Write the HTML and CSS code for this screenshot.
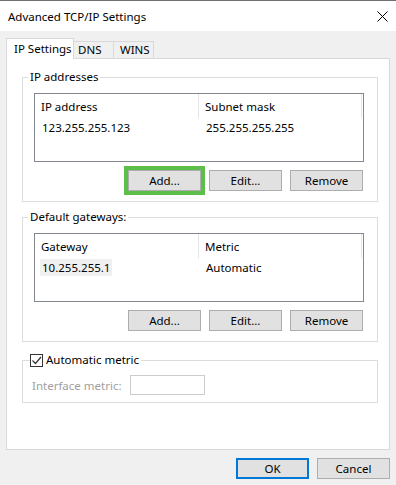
FILE: index.html
```html
<!DOCTYPE html>
<html lang="en">
<head>
  <meta charset="UTF-8" />
  <title>Advanced TCP/IP Settings</title>
  <link rel="stylesheet" href="styles.css">
</head>
<body>
  <div class="window">
    <div class="titlebar">
      <span class="title">Advanced TCP/IP Settings</span>
      <svg class="close" width="11" height="11" viewBox="0 0 11 11">
        <path d="M0.5 0.5 L10.5 10.5 M10.5 0.5 L0.5 10.5" stroke="#000" stroke-width="1" fill="none"/>
      </svg>
    </div>

    <div class="content">
      <div class="tabs">
        <div class="tab active">IP Settings</div>
        <div class="tab tab-dns">DNS</div>
        <div class="tab tab-wins">WINS</div>
      </div>

      <div class="panel">
        <fieldset class="group">
          <legend>IP addresses</legend>
          <div class="listview">
            <div class="lv-head">
              <div class="col c1">IP address</div>
              <div class="col c2">Subnet mask</div>
            </div>
            <div class="lv-row">
              <div class="col c1"><span class="cell">123.255.255.123</span></div>
              <div class="col c2"><span class="cell">255.255.255.255</span></div>
            </div>
          </div>
          <div class="buttons">
            <button class="btn highlight">Add...</button>
            <button class="btn">Edit...</button>
            <button class="btn">Remove</button>
          </div>
        </fieldset>

        <fieldset class="group group-gw">
          <legend>Default gateways:</legend>
          <div class="listview">
            <div class="lv-head">
              <div class="col c1">Gateway</div>
              <div class="col c2">Metric</div>
            </div>
            <div class="lv-row">
              <div class="col c1"><span class="cell selected">10.255.255.1</span></div>
              <div class="col c2"><span class="cell">Automatic</span></div>
            </div>
          </div>
          <div class="buttons">
            <button class="btn">Add...</button>
            <button class="btn">Edit...</button>
            <button class="btn">Remove</button>
          </div>
        </fieldset>

        <fieldset class="group group-metric">
          <legend class="check-legend">
            <span class="checkbox">
              <svg width="11" height="11" viewBox="0 0 11 11">
                <path d="M1.5 5.5 L4.5 8.5 L10 2" stroke="#333" stroke-width="1.2" fill="none"/>
              </svg>
            </span>
            Automatic metric
          </legend>
          <div class="metric-row">
            <span class="metric-label">Interface metric:</span>
            <span class="metric-input"></span>
          </div>
        </fieldset>
      </div>

      <div class="footer">
        <button class="btn default">OK</button>
        <button class="btn">Cancel</button>
      </div>
    </div>
  </div>
</body>
</html>
```

FILE: styles.css
```css
body { margin:0; background:#f0f0f0; font-family:"Noto Sans", "Open Sans", sans-serif; font-size:11.5px; color:#000; }
.window { width:396px; height:485px; }

.titlebar { height:30px; background:#fff; border-top:1px solid #6f6f6f; display:flex; align-items:center; justify-content:space-between; padding:0 8px; }

.content { padding:0 6px; }

.tabs { display:flex; align-items:flex-end; margin-top:7px; }
.tab { box-sizing:border-box; height:17px; line-height:15px; border:1px solid #d9d9d9; border-bottom:none; border-left:none; background:#f0f0f0; white-space:nowrap; }
.tab.active { position:relative; height:21px; line-height:20px; width:68px; padding-left:7px; border-left:1px solid #d9d9d9; background:#fff; margin-bottom:-1px; }
.tab-dns { width:40px; padding-left:4px; }
.tab-wins { width:40px; padding-left:6px; }

.panel { box-sizing:border-box; height:392px; border:1px solid #d9d9d9; background:#fff; }

.group { margin:10px 11px 0 15px; border:1px solid #dcdcdc; padding:8px 13px 10px 11px; min-width:0; }
.group legend { padding:0 2px; margin-left:-6px; line-height:16px; }
.group-gw { margin-top:7px; }

.listview { box-sizing:border-box; height:69px; border:1px solid #828790; background:#fff; }
.lv-head { display:flex; height:24px; }
.lv-row { display:flex; height:18px; }
.col { box-sizing:border-box; display:flex; align-items:center; white-space:nowrap; }
.c1 { width:164px; }
.c2 { width:163px; }
.lv-head .col { padding-left:6px; border-right:1px solid #e5e5e5; }
.lv-row .col { padding-left:5px; }
.cell { padding:0 2px; line-height:17px; }
.cell.selected { background:#f0f0f0; }

.buttons { display:flex; justify-content:flex-end; gap:8px; margin-top:8px; padding-right:1px; }
.btn { box-sizing:border-box; width:73px; height:21px; padding:0; border:1px solid #adadad; background:#e1e1e1; font-family:inherit; font-size:11.5px; color:#000; }
.btn.highlight { outline:4px solid #5dbf4a; }
.btn.default { border:2px solid #0078d7; }

.group-metric { padding:7px 13px 7px 9px; }
.group-metric .check-legend { display:flex; align-items:center; gap:3px; margin-left:-2px; padding:0 2px 0 0; }
.checkbox { box-sizing:border-box; width:13px; height:13px; border:1px solid #333; background:#fff; display:flex; align-items:center; justify-content:center; }
.metric-row { display:flex; align-items:center; height:20px; }
.metric-label { width:98px; color:#a0a0a0; white-space:nowrap; }
.metric-input { box-sizing:border-box; width:75px; height:20px; border:1px solid #cccccc; background:#fff; }

.footer { display:flex; justify-content:flex-end; gap:8px; margin-top:8px; }
```
